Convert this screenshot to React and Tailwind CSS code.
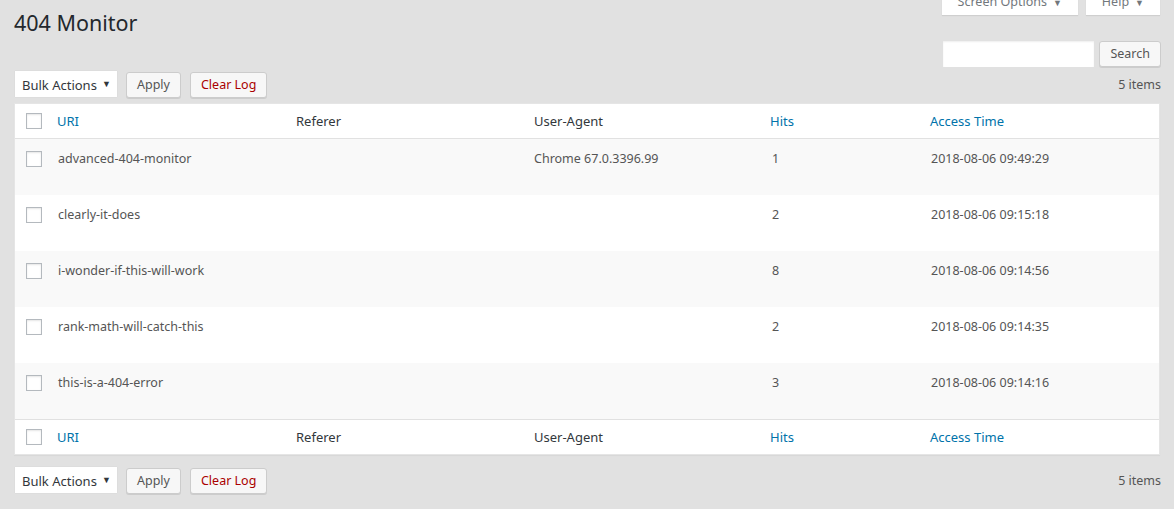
const rows = [
  { uri: 'advanced-404-monitor', agent: 'Chrome 67.0.3396.99', hits: '1', time: '2018-08-06 09:49:29' },
  { uri: 'clearly-it-does', agent: '', hits: '2', time: '2018-08-06 09:15:18' },
  { uri: 'i-wonder-if-this-will-work', agent: '', hits: '8', time: '2018-08-06 09:14:56' },
  { uri: 'rank-math-will-catch-this', agent: '', hits: '2', time: '2018-08-06 09:14:35' },
  { uri: 'this-is-a-404-error', agent: '', hits: '3', time: '2018-08-06 09:14:16' },
]

const cols = 'grid grid-cols-[42px_239px_238px_236px_160px_1fr]'

function Checkbox() {
  return <span className="block w-4 h-4 border border-[#b4b9be] bg-white shadow-[inset_0_1px_2px_rgba(0,0,0,0.1)]" />
}

function Btn({ children, red }) {
  return (
    <button className={`h-[26px] px-[10px] border border-[#cccccc] rounded-[3px] bg-[#f7f7f7] shadow-[0_1px_0_#cccccc] text-[12.5px] leading-[24px] whitespace-nowrap ${red ? 'text-[#a00]' : 'text-[#555]'}`}>
      {children}
    </button>
  )
}

function Toolbar() {
  return (
    <div className="flex items-center h-[34px] pl-[15px] pr-[13px]">
      <div className="flex items-center w-[102px] h-[26px] bg-white pl-[7px] pr-[6px] pt-[3px] text-[13px] text-[#32373c] whitespace-nowrap shadow-[0_0_1px_rgba(0,0,0,0.1)]">
        <span className="flex-1">Bulk Actions</span>
        <span className="text-[9px] -mt-[3px]">▼</span>
      </div>
      <div className="ml-[9px]"><Btn>Apply</Btn></div>
      <div className="ml-[9px]"><Btn red>Clear Log</Btn></div>
      <span className="ml-auto pt-[3px] text-[12.5px] text-[#555]">5 items</span>
    </div>
  )
}

function HeadRow({ top }) {
  return (
    <div className={`${cols} items-center h-[35px] text-[13px] ${top ? 'border-b' : 'border-t'} border-[#e1e1e1]`}>
      <div className="pl-[11px]"><Checkbox /></div>
      <span className="pt-[2px] text-[#0073aa]">URI</span>
      <span className="pt-[2px] text-[#32373c]">Referer</span>
      <span className="pt-[2px] text-[#32373c]">User-Agent</span>
      <span className="pt-[2px] text-[#0073aa]">Hits</span>
      <span className="pt-[2px] text-[#0073aa]">Access Time</span>
    </div>
  )
}

export default function App() {
  return (
    <div className="w-[1174px] h-[509px] bg-[#e1e1e1] overflow-hidden text-[#555] font-['Noto_Sans','Liberation_Sans',sans-serif]">
      <div className="flex items-start">
        <h1 className="pl-[14px] pt-[8px] text-[21.5px] leading-[29px] text-[#23282d]">404 Monitor</h1>
        <div className="ml-auto flex gap-[8px] pr-[14px] -mt-[10px]">
          <div className="flex items-center gap-[6px] h-[25px] px-[16px] bg-white shadow-[0_1px_1px_rgba(0,0,0,0.08)] text-[12.5px] text-[#72777c]">
            Screen Options <span className="text-[9px]">▼</span>
          </div>
          <div className="flex items-center gap-[6px] h-[25px] px-[16px] bg-white shadow-[0_1px_1px_rgba(0,0,0,0.08)] text-[12.5px] text-[#72777c]">
            Help <span className="text-[9px]">▼</span>
          </div>
        </div>
      </div>
      <div className="flex justify-end gap-[5px] pr-[13px] mt-[4px]">
        <div className="w-[151px] h-[26px] bg-white shadow-[inset_0_1px_2px_rgba(0,0,0,0.07)]" />
        <Btn>Search</Btn>
      </div>
      <Toolbar />
      <div className="mx-[14px] mt-[2px] bg-white shadow-[0_1px_1px_rgba(0,0,0,0.04)] border border-[#e5e5e5]">
        <HeadRow top />
        {rows.map((r, i) => (
          <div key={r.uri} className={`${cols} h-[56px] pt-[11px] text-[12.5px] ${i % 2 === 0 ? 'bg-[#f9f9f9]' : 'bg-white'}`}>
            <div className="pl-[11px] pt-[1px]"><Checkbox /></div>
            <span className="pl-[1px]">{r.uri}</span>
            <span />
            <span>{r.agent}</span>
            <span className="pl-[2px]">{r.hits}</span>
            <span className="pl-[1px]">{r.time}</span>
          </div>
        ))}
        <HeadRow />
      </div>
      <div className="mt-[8px]">
        <Toolbar />
      </div>
    </div>
  )
}
